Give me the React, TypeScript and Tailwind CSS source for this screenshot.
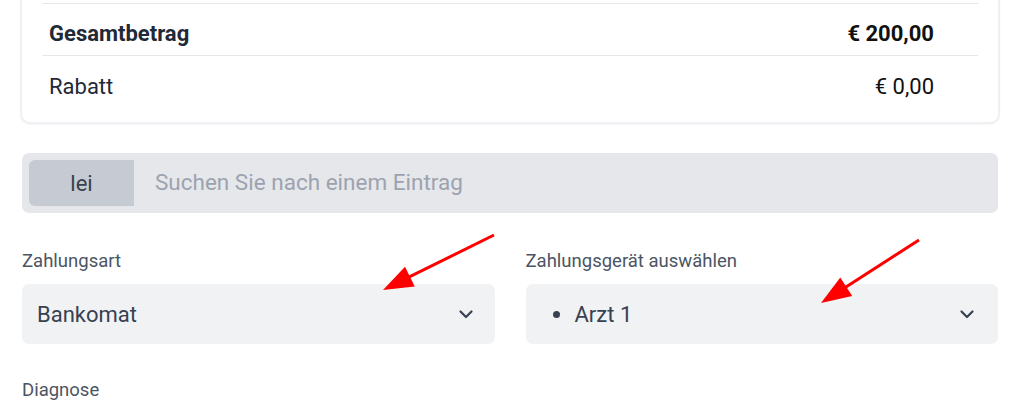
import React from 'react';

const Chevron = () => (
  <svg width="16" height="10" viewBox="0 0 16 10" fill="none" className="shrink-0">
    <path d="M2.5 2.5l5.5 5.5 5.5-5.5" stroke="#374151" strokeWidth="2.2" strokeLinecap="round" strokeLinejoin="round" />
  </svg>
);

const Arrow = ({ x1, y1, x2, y2 }: { x1: number; y1: number; x2: number; y2: number }) => {
  const dx = x2 - x1;
  const dy = y2 - y1;
  const len = Math.sqrt(dx * dx + dy * dy);
  const ux = dx / len;
  const uy = dy / len;
  const headLen = 30;
  const headW = 11;
  const bx = x2 - ux * headLen;
  const by = y2 - uy * headLen;
  const p1 = `${bx - uy * headW},${by + ux * headW}`;
  const p2 = `${bx + uy * headW},${by - ux * headW}`;
  return (
    <g>
      <line x1={x1} y1={y1} x2={bx + ux * 4} y2={by + uy * 4} stroke="#ff0000" strokeWidth="3" />
      <polygon points={`${x2},${y2} ${p1} ${p2}`} fill="#ff0000" />
    </g>
  );
};

export default function App() {
  return (
    <div className="relative w-[1024px] h-[409px] overflow-hidden bg-white pl-5 pr-6 font-['Roboto',sans-serif]">
      {/* summary card */}
      <div className="mt-[-12px] rounded-[10px] border-2 border-[#eff0f3] bg-white px-5 pt-[13px] pb-[3px] shadow-[0_1px_2px_rgba(0,0,0,0.04)]">
        <div className="border-t border-[#e5e7eb]">
          <div className="flex items-center justify-between pl-[7px] pr-[44px] pt-[16px] pb-[7px] text-[22px] leading-[28px] font-bold text-[#1f2937]">
            <span>Gesamtbetrag</span>
            <span className="text-[#111]">€ 200,00</span>
          </div>
        </div>
        <div className="border-t border-[#e5e7eb]">
          <div className="flex items-center justify-between pl-[7px] pr-[44px] pt-[17px] pb-[18px] text-[22px] leading-[28px] text-[#1f2937]">
            <span>Rabatt</span>
            <span className="text-[#111]">€ 0,00</span>
          </div>
        </div>
      </div>

      {/* search */}
      <div className="mt-[29px] mx-[2px] flex h-[60px] items-stretch rounded-[7px] bg-[#e5e7eb] p-[7px]">
        <div className="flex w-[105px] items-center justify-center rounded-l-[6px] bg-[#c6cad2] text-[22px] text-[#374151]">
          lei
        </div>
        <div className="flex items-center pl-[21px] text-[22.5px] text-[#9ca3af]">
          Suchen Sie nach einem Eintrag
        </div>
      </div>

      {/* selects */}
      <div className="mt-[36px] mx-[2px] grid grid-cols-2 gap-[31px]">
        <div className="flex flex-col">
          <div className="h-[24px] text-[18.5px] leading-[24px] text-[#4b5563]">Zahlungsart</div>
          <div className="mt-[11px] flex h-[60px] items-center justify-between rounded-[7px] bg-[#f1f2f4] pl-[15px] pr-[21px]">
            <span className="text-[22px] text-[#374151]">Bankomat</span>
            <Chevron />
          </div>
        </div>
        <div className="flex flex-col">
          <div className="h-[24px] text-[18.5px] leading-[24px] text-[#4b5563]">Zahlungsgerät auswählen</div>
          <div className="mt-[11px] flex h-[60px] items-center justify-between rounded-[7px] bg-[#f1f2f4] pl-[27px] pr-[23px]">
            <span className="flex items-center gap-[15px] text-[22px] text-[#374151]">
              <span className="h-[7px] w-[7px] rounded-full bg-[#374151]" />
              Arzt 1
            </span>
            <Chevron />
          </div>
        </div>
      </div>

      <div className="mt-[34px] mx-[2px] text-[18.5px] leading-[24px] text-[#4b5563]">Diagnose</div>

      {/* annotation arrows */}
      <svg className="pointer-events-none absolute inset-0" width="1024" height="409">
        <Arrow x1={494} y1={235} x2={383} y2={290} />
        <Arrow x1={919} y1={240} x2={821} y2={303} />
      </svg>
    </div>
  );
}
